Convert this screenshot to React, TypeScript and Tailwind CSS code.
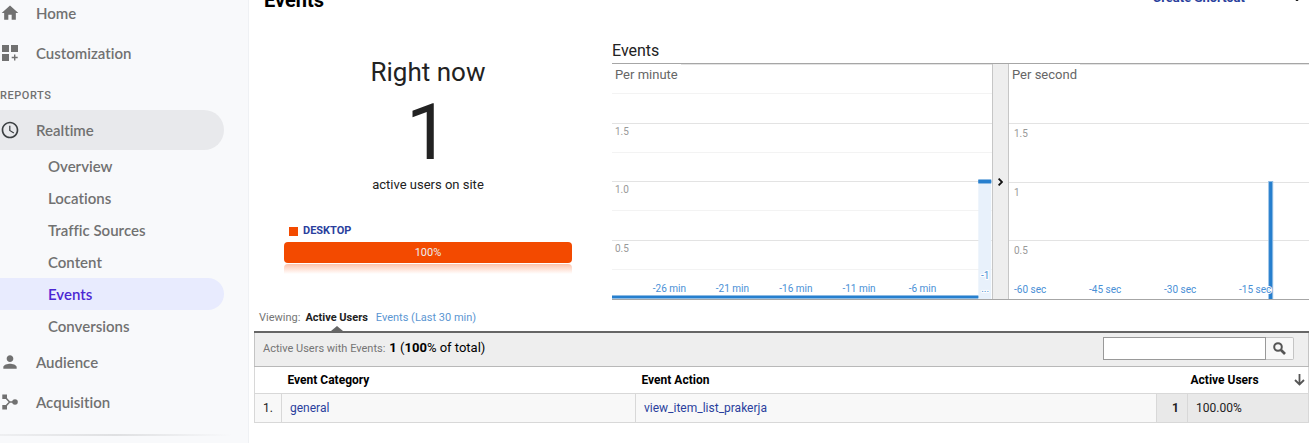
import type { ReactNode } from "react";
import { clsx } from "clsx";

const SUB_ITEMS = [
  "Overview",
  "Locations",
  "Traffic Sources",
  "Content",
  "Events",
  "Conversions",
];

const MINUTE_LABELS = [
  { x: "15.1%", label: "-26 min" },
  { x: "31.7%", label: "-21 min" },
  { x: "48.4%", label: "-16 min" },
  { x: "65%", label: "-11 min" },
  { x: "81.7%", label: "-6 min" },
];

const SECOND_LABELS = [
  { x: "1.7%", label: "-60 sec" },
  { x: "26.7%", label: "-45 sec" },
  { x: "51.7%", label: "-30 sec" },
  { x: "76.7%", label: "-15 sec" },
];

function HomeIcon() {
  return (
    <svg className="size-5 shrink-0" viewBox="0 0 24 24" fill="currentColor">
      <path d="M10 20v-6h4v6h5v-8h3L12 3 2 12h3v8z" />
    </svg>
  );
}

function CustomizationIcon() {
  return (
    <svg className="size-5 shrink-0" viewBox="0 0 20 20" fill="currentColor">
      <path d="M2 2h7v7H2zM11 2h7v7h-7zM2 11h7v7H2zM14 11.5h1.4v2.3h2.3v1.4h-2.3v2.3H14v-2.3h-2.3v-1.4H14z" />
    </svg>
  );
}

function ClockIcon() {
  return (
    <svg className="size-5 shrink-0 text-[#3c4043]" viewBox="0 0 24 24" fill="currentColor">
      <path d="M11.99 2C6.47 2 2 6.48 2 12s4.47 10 9.99 10C17.52 22 22 17.52 22 12S17.52 2 11.99 2zM12 20c-4.42 0-8-3.58-8-8s3.58-8 8-8 8 3.58 8 8-3.58 8-8 8zm.5-13H11v6l5.25 3.15.75-1.23-4.5-2.67z" />
    </svg>
  );
}

function PersonIcon() {
  return (
    <svg className="size-5 shrink-0" viewBox="0 0 24 24" fill="currentColor">
      <path d="M12 12c2.21 0 4-1.79 4-4s-1.79-4-4-4-4 1.79-4 4 1.79 4 4 4zm0 2c-2.67 0-8 1.34-8 4v2h16v-2c0-2.66-5.33-4-8-4z" />
    </svg>
  );
}

function AcquisitionIcon() {
  return (
    <svg className="size-5 shrink-0" viewBox="0 0 20 20" fill="currentColor">
      <path d="M2.3 2.4H7V7H2.3zM2.3 13H7v4.6H2.3z" />
      <circle cx="15" cy="10" r="2.8" />
      <path d="M5 5l4.6 5L5 15M9 10h6" fill="none" stroke="currentColor" strokeWidth="1.5" />
    </svg>
  );
}

function NavItem({
  icon,
  label,
  active,
}: {
  icon: ReactNode;
  label: string;
  active?: boolean;
}) {
  return (
    <a
      href="#"
      className={clsx(
        "mr-6 flex h-10 items-center gap-4 rounded-r-full",
        active && "bg-[#e8e9ec]"
      )}
    >
      {icon}
      {label}
    </a>
  );
}

function Sidebar() {
  return (
    <nav className="-mt-[7px] w-[249px] shrink-0 border-r border-[#eff1f4] bg-[#f8f9fb] font-['Lato',sans-serif] text-[15px] font-semibold text-[#717171] [font-variant-ligatures:none]">
      <NavItem icon={<HomeIcon />} label="Home" />
      <NavItem icon={<CustomizationIcon />} label="Customization" />
      <h2 className="flex h-[37px] items-center pt-2.5 font-['Roboto',sans-serif] text-[11px] font-medium tracking-wider">
        REPORTS
      </h2>
      <NavItem icon={<ClockIcon />} label="Realtime" active />
      {SUB_ITEMS.map((item) => (
        <a
          key={item}
          href="#"
          className={clsx(
            "mr-6 flex h-8 items-center rounded-r-full pl-12",
            item === "Events" && "bg-[#e8ebfe] text-[#4b27d3]"
          )}
        >
          {item}
        </a>
      ))}
      <NavItem icon={<PersonIcon />} label="Audience" />
      <NavItem icon={<AcquisitionIcon />} label="Acquisition" />
      <div className="mt-3 mr-4 h-0.5 bg-linear-to-r from-[#eeeff1] via-[#dfe0e2] to-[#f8f9fb]" />
    </nav>
  );
}

function TopBar() {
  return (
    <header className="flex h-3 items-end justify-between overflow-hidden pr-2 pl-2.5">
      <h1 className="text-xl leading-6 font-bold text-black">Events</h1>
      <div className="flex items-end gap-12 pb-1.5">
        <a href="#" className="text-[13px] leading-4 font-bold text-[#2a3f9d]">
          Create Shortcut
        </a>
        <svg className="mb-1 h-2 w-2" viewBox="0 0 8 8" fill="#222">
          <path d="M0 0h8L5 7H3z" />
        </svg>
      </div>
    </header>
  );
}

function RightNow() {
  return (
    <section className="w-[358px] shrink-0 pr-10 pl-[30px] text-center text-[#222]">
      <h2 className="pt-11 text-[26px] leading-8">Right now</h2>
      <p className="text-[78px] leading-[89px]">1</p>
      <p className="text-[13px] leading-4">active users on site</p>
      <div className="flex items-center gap-[5px] pt-[30px] pl-[5px] text-[11px] leading-4 font-bold text-[#2a3f9d]">
        <span className="size-[9px] bg-[#f34a00]" />
        <a href="#">DESKTOP</a>
      </div>
      <div className="mt-[3px] rounded-sm bg-[#f34a00] text-[11px] leading-[21px] text-[#eee]">100%</div>
      <div className="mt-px h-2.5 rounded-t-sm bg-linear-to-b from-[#fbc4ae] to-white" />
    </section>
  );
}

function GridLine({ y, minor }: { y: number; minor?: boolean }) {
  return (
    <rect x="0" y={y} width="100%" height="1" fill={minor ? "#f3f3f3" : "#e3e3e3"} />
  );
}

function MinuteChart() {
  return (
    <div className="min-w-0 flex-[380]">
      <svg className="block h-[235px] w-full text-[10px]" fill="#4a90d6">
        <GridLine y={0} />
        {[29, 88, 146, 205].map((y) => (
          <GridLine key={y} y={y} minor />
        ))}
        {[59, 117, 176].map((y) => (
          <GridLine key={y} y={y} />
        ))}
        <rect width="69" height="20" fill="#fff" />
        <text x="3" y="15" fontSize="13" fill="#666">Per minute</text>
        <g fill="#999">
          <text x="3" y="71">1.5</text>
          <text x="3" y="129">1.0</text>
          <text x="3" y="188">0.5</text>
        </g>
        <rect x="96.4%" y="118" width="3.4%" height="117" fill="#e8f1fb" />
        <rect x="96.4%" y="115" width="3.4%" height="5" fill="#8dbbe4" />
        <rect x="96.4%" y="116" width="3.4%" height="3" fill="#267fce" />
        <rect x="0" y="231" width="96.4%" height="4" fill="#8dbbe4" />
        <rect x="0" y="232" width="96.4%" height="2" fill="#267fce" />
        {MINUTE_LABELS.map(({ x, label }) => (
          <text key={label} x={x} y="228" textAnchor="middle">
            {label}
          </text>
        ))}
        <g textAnchor="middle" stroke="#fff" strokeWidth="2" paintOrder="stroke">
          <text x="98.2%" y="215">-1</text>
          <text x="98.2%" y="228">...</text>
        </g>
      </svg>
    </div>
  );
}

function SecondChart() {
  return (
    <div className="min-w-0 flex-[300]">
      <svg className="block h-[235px] w-full text-[10px]" fill="#4a90d6">
        {[0, 59, 118, 176].map((y) => (
          <GridLine key={y} y={y} />
        ))}
        <rect width="71" height="20" fill="#fff" />
        <text x="3" y="15" fontSize="13" fill="#666">Per second</text>
        <g fill="#999">
          <text x="5" y="73">1.5</text>
          <text x="5" y="132">1</text>
          <text x="5" y="190">0.5</text>
        </g>
        <rect x="86.4%" y="117" width="5" height="118" fill="#8dbbe4" />
        <rect x="86.7%" y="118" width="3" height="117" fill="#267fce" />
        {SECOND_LABELS.map(({ x, label }) => (
          <text key={label} x={x} y="229" stroke="#fff" strokeWidth="2" paintOrder="stroke">
            {label}
          </text>
        ))}
      </svg>
    </div>
  );
}

function EventCharts() {
  return (
    <section className="min-w-0 flex-1">
      <h2 className="pt-[27px] text-base leading-6 text-[#222]">Events</h2>
      <div className="flex border-y border-[#a6a6a6]">
        <MinuteChart />
        <button
          type="button"
          aria-label="Collapse"
          className="flex w-[17px] shrink-0 items-center justify-center border-x border-[#c6c6c6] bg-[#eee]"
        >
          <svg className="h-2 w-[5px]" viewBox="0 0 5 8" fill="none" stroke="#111" strokeWidth="1.8">
            <path d="M.6.6L4 4 .6 7.4" />
          </svg>
        </button>
        <SecondChart />
      </div>
    </section>
  );
}

function ViewingTabs() {
  return (
    <div className="flex h-[33px] items-stretch border-b-2 border-[#666] pl-[5px] text-[11px] leading-4 text-[#757575]">
      <span className="pt-2.5">Viewing:</span>
      <button type="button" className="ml-[5px] flex flex-col items-center justify-between pt-2.5 font-bold text-[#222]">
        Active Users
        <svg className="h-[5px] w-3 shrink-0" viewBox="0 0 12 6" preserveAspectRatio="none" fill="#666">
          <path d="M6 0l6 6H0z" />
        </svg>
      </button>
      <button type="button" className="ml-2 flex pt-2.5 text-[#5b96d2]">
        Events (Last 30 min)
      </button>
    </div>
  );
}

function SearchBar() {
  return (
    <div className="flex h-[33px] items-center justify-between border-x border-[#c4c4c4] bg-[#eee] pr-3.5 pb-0.5 pl-2">
      <p className="text-[13px] leading-4 text-black">
        <span className="mr-1 text-[11px] text-[#757575]">Active Users with Events:</span>
        <b>1</b> (<b>100</b>% of total)
      </p>
      <form className="flex h-[23px]" onSubmit={(e) => e.preventDefault()}>
        <input
          type="text"
          aria-label="Search events"
          className="w-[163px] border border-[#999] bg-white px-1 text-xs outline-none"
        />
        <button
          type="submit"
          aria-label="Search"
          className="flex w-7 items-center justify-center rounded-r-xs border border-l-0 border-[#c4c4c4] bg-[#f8f8f8]"
        >
          <svg className="size-[13px]" viewBox="0 0 13 13" fill="none" stroke="#555">
            <circle cx="5" cy="5" r="3.8" strokeWidth="2" />
            <path d="M8 8l4 4" strokeWidth="2.6" />
          </svg>
        </button>
      </form>
    </div>
  );
}

function EventsTable() {
  return (
    <table className="w-full table-fixed border-collapse border border-[#d8d8d8] text-left text-xs">
      <colgroup>
        <col className="w-[27px]" />
        <col className="w-[354px]" />
        <col />
        <col className="w-[31px]" />
        <col className="w-[121px]" />
      </colgroup>
      <thead>
        <tr className="h-[27px] border-y border-[#b8b8b8] font-bold text-black">
          <th />
          <th className="pl-1.5">Event Category</th>
          <th className="pl-1.5">Event Action</th>
          <th />
          <th>
            <div className="flex items-center justify-between pr-[3px] pl-[3px]">
              Active Users
              <svg className="h-3 w-[11px]" viewBox="0 0 11 12" fill="none" stroke="#555" strokeWidth="1.8">
                <path d="M5.5 0v10.4M1 6l4.5 4.5L10 6" />
              </svg>
            </div>
          </th>
        </tr>
      </thead>
      <tbody>
        <tr className="h-[29px] bg-[#f8f8f8] text-[#222]">
          <td className="border border-[#d8d8d8] text-center">1.</td>
          <td className="border border-[#d8d8d8] pl-2">
            <a href="#" className="text-[#2a3f9d]">general</a>
          </td>
          <td className="border border-[#d8d8d8] pl-2">
            <a href="#" className="text-[#2a3f9d]">view_item_list_prakerja</a>
          </td>
          <td className="border border-[#d8d8d8] bg-[#e9e9e9] pr-2 text-right font-bold">1</td>
          <td className="border border-[#d8d8d8] bg-[#e9e9e9] pl-2">100.00%</td>
        </tr>
      </tbody>
    </table>
  );
}

export default function App() {
  return (
    <div className="flex h-screen overflow-hidden bg-white font-['Roboto',sans-serif]">
      <Sidebar />
      <main className="min-w-0 flex-1 pr-1 pl-[5px]">
        <TopBar />
        <div className="flex">
          <RightNow />
          <EventCharts />
        </div>
        <ViewingTabs />
        <SearchBar />
        <EventsTable />
      </main>
    </div>
  );
}
